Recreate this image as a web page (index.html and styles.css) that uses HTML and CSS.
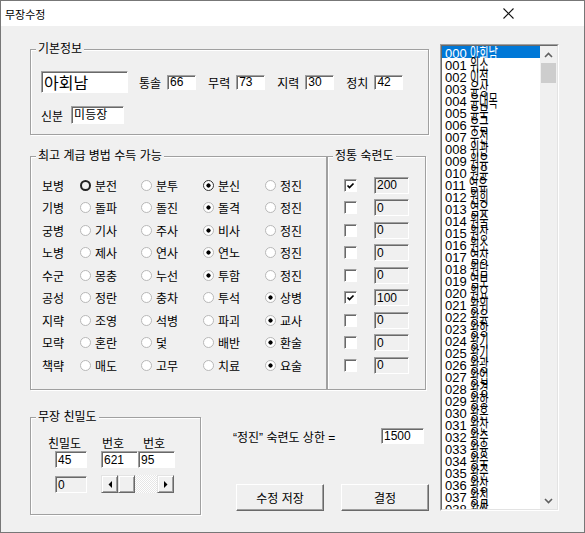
FILE: index.html
```html
<!DOCTYPE html>
<html lang="ko">
<head>
  <meta charset="UTF-8" />
  <title>무장수정</title>
  <link rel="stylesheet" href="styles.css">
</head>
<body>
  <div class="window">
    <div class="titlebar">
      <span class="title">무장수정</span>
      <svg class="close" width="11" height="11" viewBox="0 0 11 11"><path d="M0.5 0.5L10.5 10.5M10.5 0.5L0.5 10.5" stroke="#111" stroke-width="1.1" fill="none"/></svg>
    </div>

    <div class="client">
      <div class="left">
        <div class="group basic">
          <span class="group-title">기본정보</span>
          <div class="basic-row">
            <div class="edit name">아회남</div>
            <div class="field first"><span>통솔</span><div class="edit stat">66</div></div>
            <div class="field"><span>무력</span><div class="edit stat">73</div></div>
            <div class="field"><span>지력</span><div class="edit stat">30</div></div>
            <div class="field"><span>정치</span><div class="edit stat">42</div></div>
          </div>
          <div class="basic-row rank">
            <span>신분</span><div class="edit rank-box">미등장</div>
          </div>
        </div>

        <div class="mid">
          <div class="group skills">
            <span class="group-title">최고 계급 병법 수득 가능</span>
            <div class="skill-grid">
              <span>보병</span>
              <span class="opt"><i class="radio focus"></i>분전</span>
              <span class="opt"><i class="radio"></i>분투</span>
              <span class="opt"><i class="radio on dark"></i>분신</span>
              <span class="opt"><i class="radio"></i>정진</span>

              <span>기병</span>
              <span class="opt"><i class="radio"></i>돌파</span>
              <span class="opt"><i class="radio"></i>돌진</span>
              <span class="opt"><i class="radio on"></i>돌격</span>
              <span class="opt"><i class="radio"></i>정진</span>

              <span>궁병</span>
              <span class="opt"><i class="radio"></i>기사</span>
              <span class="opt"><i class="radio"></i>주사</span>
              <span class="opt"><i class="radio on"></i>비사</span>
              <span class="opt"><i class="radio"></i>정진</span>

              <span>노병</span>
              <span class="opt"><i class="radio"></i>제사</span>
              <span class="opt"><i class="radio"></i>연사</span>
              <span class="opt"><i class="radio on"></i>연노</span>
              <span class="opt"><i class="radio"></i>정진</span>

              <span>수군</span>
              <span class="opt"><i class="radio"></i>몽충</span>
              <span class="opt"><i class="radio"></i>누선</span>
              <span class="opt"><i class="radio on"></i>투함</span>
              <span class="opt"><i class="radio"></i>정진</span>

              <span>공성</span>
              <span class="opt"><i class="radio"></i>정란</span>
              <span class="opt"><i class="radio"></i>충차</span>
              <span class="opt"><i class="radio"></i>투석</span>
              <span class="opt"><i class="radio on"></i>상병</span>

              <span>지략</span>
              <span class="opt"><i class="radio"></i>조영</span>
              <span class="opt"><i class="radio"></i>석병</span>
              <span class="opt"><i class="radio"></i>파괴</span>
              <span class="opt"><i class="radio on"></i>교사</span>

              <span>모략</span>
              <span class="opt"><i class="radio"></i>혼란</span>
              <span class="opt"><i class="radio"></i>덫</span>
              <span class="opt"><i class="radio"></i>배반</span>
              <span class="opt"><i class="radio on"></i>환술</span>

              <span>책략</span>
              <span class="opt"><i class="radio"></i>매도</span>
              <span class="opt"><i class="radio"></i>고무</span>
              <span class="opt"><i class="radio"></i>치료</span>
              <span class="opt"><i class="radio on"></i>요술</span>
            </div>
          </div>

          <div class="group mastery">
            <span class="group-title">정통 숙련도</span>
            <div class="mastery-row"><i class="check on"></i><div class="edit gray level">200</div></div>
            <div class="mastery-row"><i class="check"></i><div class="edit gray level">0</div></div>
            <div class="mastery-row"><i class="check"></i><div class="edit gray level">0</div></div>
            <div class="mastery-row"><i class="check"></i><div class="edit gray level">0</div></div>
            <div class="mastery-row"><i class="check"></i><div class="edit gray level">0</div></div>
            <div class="mastery-row"><i class="check on"></i><div class="edit gray level">100</div></div>
            <div class="mastery-row"><i class="check"></i><div class="edit gray level">0</div></div>
            <div class="mastery-row"><i class="check"></i><div class="edit gray level">0</div></div>
            <div class="mastery-row"><i class="check"></i><div class="edit gray level">0</div></div>
          </div>
        </div>

        <div class="bottom">
          <div class="group friend">
            <span class="group-title">무장 친밀도</span>
            <div class="friend-grid">
              <span class="flabel l1">친밀도</span>
              <span class="flabel l2">번호</span>
              <span class="flabel l3">번호</span>
              <div class="edit small">45</div>
              <div class="edit mid-box">621</div>
              <div class="edit mid-box">95</div>
              <div class="edit gray small low">0</div>
              <div class="hscroll low">
                <div class="raised sb-btn"><svg width="4" height="7" viewBox="0 0 4 7"><path d="M4 0V7L0.5 3.5Z" fill="#000"/></svg></div>
                <div class="raised sb-thumb"></div>
                <div class="sb-track"></div>
                <div class="raised sb-btn"><svg width="4" height="7" viewBox="0 0 4 7"><path d="M0 0V7L3.5 3.5Z" fill="#000"/></svg></div>
              </div>
            </div>
          </div>

          <div class="side">
            <div class="limit-row">
              <span>“정진” 숙련도 상한 =</span>
              <div class="edit limit">1500</div>
            </div>
            <div class="buttons">
              <button class="btn">수정 저장</button>
              <button class="btn">결정</button>
            </div>
          </div>
        </div>
      </div>

      <div class="listbox">
        <div class="list-inner">
          <div class="items">
            <div class="item sel"><span class="num">000</span><span class="nm">아회남</span></div>
            <div class="item"><span class="num">001</span><span class="nm">위소</span></div>
            <div class="item"><span class="num">002</span><span class="nm">이적</span></div>
            <div class="item"><span class="num">003</span><span class="nm">윤상</span></div>
            <div class="item"><span class="num">004</span><span class="nm">윤대목</span></div>
            <div class="item"><span class="num">005</span><span class="nm">윤묵</span></div>
            <div class="item"><span class="num">006</span><span class="nm">우금</span></div>
            <div class="item"><span class="num">007</span><span class="nm">우전</span></div>
            <div class="item"><span class="num">008</span><span class="nm">위관</span></div>
            <div class="item"><span class="num">009</span><span class="nm">원유</span></div>
            <div class="item"><span class="num">010</span><span class="nm">원윤</span></div>
            <div class="item"><span class="num">011</span><span class="nm">염유</span></div>
            <div class="item"><span class="num">012</span><span class="nm">원희</span></div>
            <div class="item"><span class="num">013</span><span class="nm">염유</span></div>
            <div class="item"><span class="num">014</span><span class="nm">원술</span></div>
            <div class="item"><span class="num">015</span><span class="nm">원상</span></div>
            <div class="item"><span class="num">016</span><span class="nm">원소</span></div>
            <div class="item"><span class="num">017</span><span class="nm">염상</span></div>
            <div class="item"><span class="num">018</span><span class="nm">원담</span></div>
            <div class="item"><span class="num">019</span><span class="nm">염보</span></div>
            <div class="item"><span class="num">020</span><span class="nm">원요</span></div>
            <div class="item"><span class="num">021</span><span class="nm">왕위</span></div>
            <div class="item"><span class="num">022</span><span class="nm">왕윤</span></div>
            <div class="item"><span class="num">023</span><span class="nm">왕항</span></div>
            <div class="item"><span class="num">024</span><span class="nm">왕기</span></div>
            <div class="item"><span class="num">025</span><span class="nm">왕기</span></div>
            <div class="item"><span class="num">026</span><span class="nm">왕광</span></div>
            <div class="item"><span class="num">027</span><span class="nm">왕업</span></div>
            <div class="item"><span class="num">028</span><span class="nm">왕경</span></div>
            <div class="item"><span class="num">029</span><span class="nm">왕항</span></div>
            <div class="item"><span class="num">030</span><span class="nm">왕혼</span></div>
            <div class="item"><span class="num">031</span><span class="nm">왕찬</span></div>
            <div class="item"><span class="num">032</span><span class="nm">왕수</span></div>
            <div class="item"><span class="num">033</span><span class="nm">왕융</span></div>
            <div class="item"><span class="num">034</span><span class="nm">왕숙</span></div>
            <div class="item"><span class="num">035</span><span class="nm">왕준</span></div>
            <div class="item"><span class="num">036</span><span class="nm">왕상</span></div>
            <div class="item"><span class="num">037</span><span class="nm">왕침</span></div>
            <div class="item"><span class="num">038</span><span class="nm">왕쌍</span></div>
          </div>
          <div class="vscroll">
            <div class="vs-btn"><svg width="9" height="6" viewBox="0 0 9 6"><path d="M1 5L4.5 1.5L8 5" stroke="#606060" stroke-width="1.6" fill="none"/></svg></div>
            <div class="vs-thumb"></div>
            <div class="vs-track"></div>
            <div class="vs-btn"><svg width="9" height="6" viewBox="0 0 9 6"><path d="M1 1L4.5 4.5L8 1" stroke="#606060" stroke-width="1.6" fill="none"/></svg></div>
          </div>
        </div>
      </div>
    </div>
  </div>
</body>
</html>
```

FILE: styles.css
```css
* {
  box-sizing: border-box;
}
body {
  margin: 0;
  font-family: "Liberation Sans", "Noto Sans CJK KR", sans-serif;
  font-size: 12px;
  color: #000;
  background: #f0f0f0;
}
.window {
  width: 585px;
  height: 533px;
  border: 1px solid #777;
  background: #f0f0f0;
  display: flex;
  flex-direction: column;
}
.titlebar {
  height: 25px;
  flex: none;
  background: #fff;
  display: flex;
  align-items: center;
  justify-content: space-between;
  padding: 0 70px 0 4px;
}
.title {
  font-size: 11px;
  font-family: "Noto Sans CJK KR", sans-serif;
}
.client {
  flex: 1;
  display: flex;
  align-items: flex-start;
  padding-left: 29px;
}
.left {
  width: 399px;
  padding-top: 23px;
}

/* group boxes */
.group {
  position: relative;
  border: 1px solid #a0a0a0;
  box-shadow: inset 1px 1px #fff, 1px 1px #fff;
}
.group-title {
  position: absolute;
  top: -8px;
  left: 5px;
  padding: 0 2px;
  line-height: 14px;
  background: #f0f0f0;
  white-space: nowrap;
}

/* edit boxes */
.edit {
  background: #fff;
  border: 1px solid;
  border-color: #a0a0a0 #fff #fff #a0a0a0;
  box-shadow: inset 1px 1px #696969;
  padding-left: 2px;
  display: flex;
  align-items: center;
  line-height: 1;
  white-space: nowrap;
}
.edit.gray {
  background: #f0f0f0;
}

.basic {
  height: 86px;
  padding: 21px 0 0 10px;
}
.basic-row {
  display: flex;
  align-items: center;
  height: 22px;
}
.edit.name {
  width: 87px;
  height: 22px;
  font-size: 16px;
  font-family: "Noto Sans CJK KR", sans-serif;
}
.field {
  display: flex;
  align-items: center;
  gap: 6px;
  margin-left: 12px;
}
.field.first {
  margin-left: 11px;
}
.edit.stat {
  width: 29px;
  height: 15px;
}
.basic-row.rank {
  margin-top: 13px;
  height: 18px;
  gap: 8px;
}
.edit.rank-box {
  width: 53px;
  height: 18px;
}

/* skills + mastery */
.mid {
  display: flex;
  margin-top: 21px;
}
.skills {
  width: 297px;
  height: 234px;
  padding: 17px 0 0 11px;
}
.skill-grid {
  display: grid;
  grid-template-columns: 38px 61px 62px 62px 50px;
  grid-auto-rows: 22.5px;
  align-items: center;
}
.opt {
  display: flex;
  align-items: center;
  gap: 4px;
}
.radio {
  width: 11px;
  height: 11px;
  flex: none;
  border-radius: 50%;
  border: 1px solid #b8b8b8;
  background: #fff;
}
.radio.on {
  background: radial-gradient(circle, #000 0 1.8px, #fff 2.4px);
}
.radio.dark {
  border-color: #333;
}
.radio.focus {
  border: 2px solid #222;
  background: transparent;
}
.mastery {
  width: 99px;
  height: 234px;
  padding: 17px 0 0 16px;
}
.mastery-row {
  display: flex;
  align-items: center;
  gap: 17px;
  height: 22.5px;
}
.check {
  width: 13px;
  height: 13px;
  flex: none;
  background: #fff;
  border: 1px solid;
  border-color: #a0a0a0 #fff #fff #a0a0a0;
  box-shadow: inset 1px 1px #696969;
}
.check.on {
  background: #fff url("data:image/svg+xml,%3Csvg xmlns='http://www.w3.org/2000/svg' width='11' height='11'%3E%3Cpath d='M2.5 5.5L4.5 7.5L8.5 3.5' stroke='%23000' stroke-width='1.7' fill='none'/%3E%3C/svg%3E") no-repeat 0 0;
}
.edit.level {
  width: 35px;
  height: 17px;
}

/* bottom area */
.bottom {
  display: flex;
  margin-top: 27px;
}
.friend {
  width: 171px;
  height: 98px;
  padding: 20px 0 0 24px;
}
.friend-grid {
  display: grid;
  grid-template-columns: 46px 37px 37px;
  grid-template-rows: 13px 17px 25px;
}
.flabel {
  line-height: 13px;
  white-space: nowrap;
}
.flabel.l1 { margin-left: -7px; }
.flabel.l2 { margin-left: 1px; }
.flabel.l3 { margin-left: 5px; }
.edit.small {
  width: 32px;
  height: 17px;
}
.edit.mid-box {
  height: 17px;
}
.low {
  align-self: end;
  height: 18px;
}
.hscroll {
  grid-column: 2 / 4;
  display: flex;
  width: 73px;
}
.raised {
  background: #f0f0f0;
  border: 1px solid;
  border-color: #e3e3e3 #696969 #696969 #e3e3e3;
  box-shadow: inset 1px 1px #fff, inset -1px -1px #a0a0a0;
}
.sb-btn {
  width: 17px;
  display: flex;
  align-items: center;
  justify-content: center;
}
.sb-thumb {
  width: 17px;
}
.sb-track {
  flex: 1;
  background: repeating-conic-gradient(#fff 0 25%, #e6e6e6 0 50%) 0 0 / 2px 2px;
}

.side {
  width: 228px;
  padding: 11px 0 0 32px;
  display: flex;
  flex-direction: column;
}
.limit-row {
  display: flex;
  align-items: center;
  height: 16px;
  padding-right: 5px;
}
.edit.limit {
  margin-left: auto;
  width: 43px;
  height: 16px;
}
.buttons {
  display: flex;
  gap: 17px;
  margin-top: 40px;
  padding-left: 3px;
}
.btn {
  width: 88px;
  height: 27px;
  font: inherit;
  color: #000;
  padding: 0;
  background: #f0f0f0;
  border: 1px solid;
  border-color: #fff #696969 #696969 #fff;
  box-shadow: inset -1px -1px #a0a0a0;
}

/* list */
.listbox {
  margin: 18px 0 0 11px;
  width: 119px;
  height: 467px;
  border: 1px solid;
  border-color: #a0a0a0 #fff #fff #a0a0a0;
}
.list-inner {
  height: 100%;
  display: flex;
  border: 1px solid;
  border-color: #696969 #e3e3e3 #e3e3e3 #696969;
  background: #fff;
}
.items {
  flex: 1;
  overflow: hidden;
}
.item {
  height: 12px;
  line-height: 12px;
  padding-left: 3px;
  white-space: nowrap;
}
.item.sel {
  background: #0078d7;
  color: #fff;
}
.num {
  font-family: "Liberation Sans", sans-serif;
  font-size: 13px;
}
.nm {
  display: inline-block;
  margin-left: 3px;
  font-family: "Noto Sans CJK KR", sans-serif;
  font-size: 14px;
  transform: scale(0.72, 1.2);
  transform-origin: 0 50%;
}
.vscroll {
  width: 17px;
  flex: none;
  display: flex;
  flex-direction: column;
  background: #f0f0f0;
}
.vs-btn {
  height: 17px;
  display: flex;
  align-items: center;
  justify-content: center;
}
.vs-thumb {
  height: 20px;
  margin: 0 1px;
  background: #cdcdcd;
}
.vs-track {
  flex: 1;
}
```
